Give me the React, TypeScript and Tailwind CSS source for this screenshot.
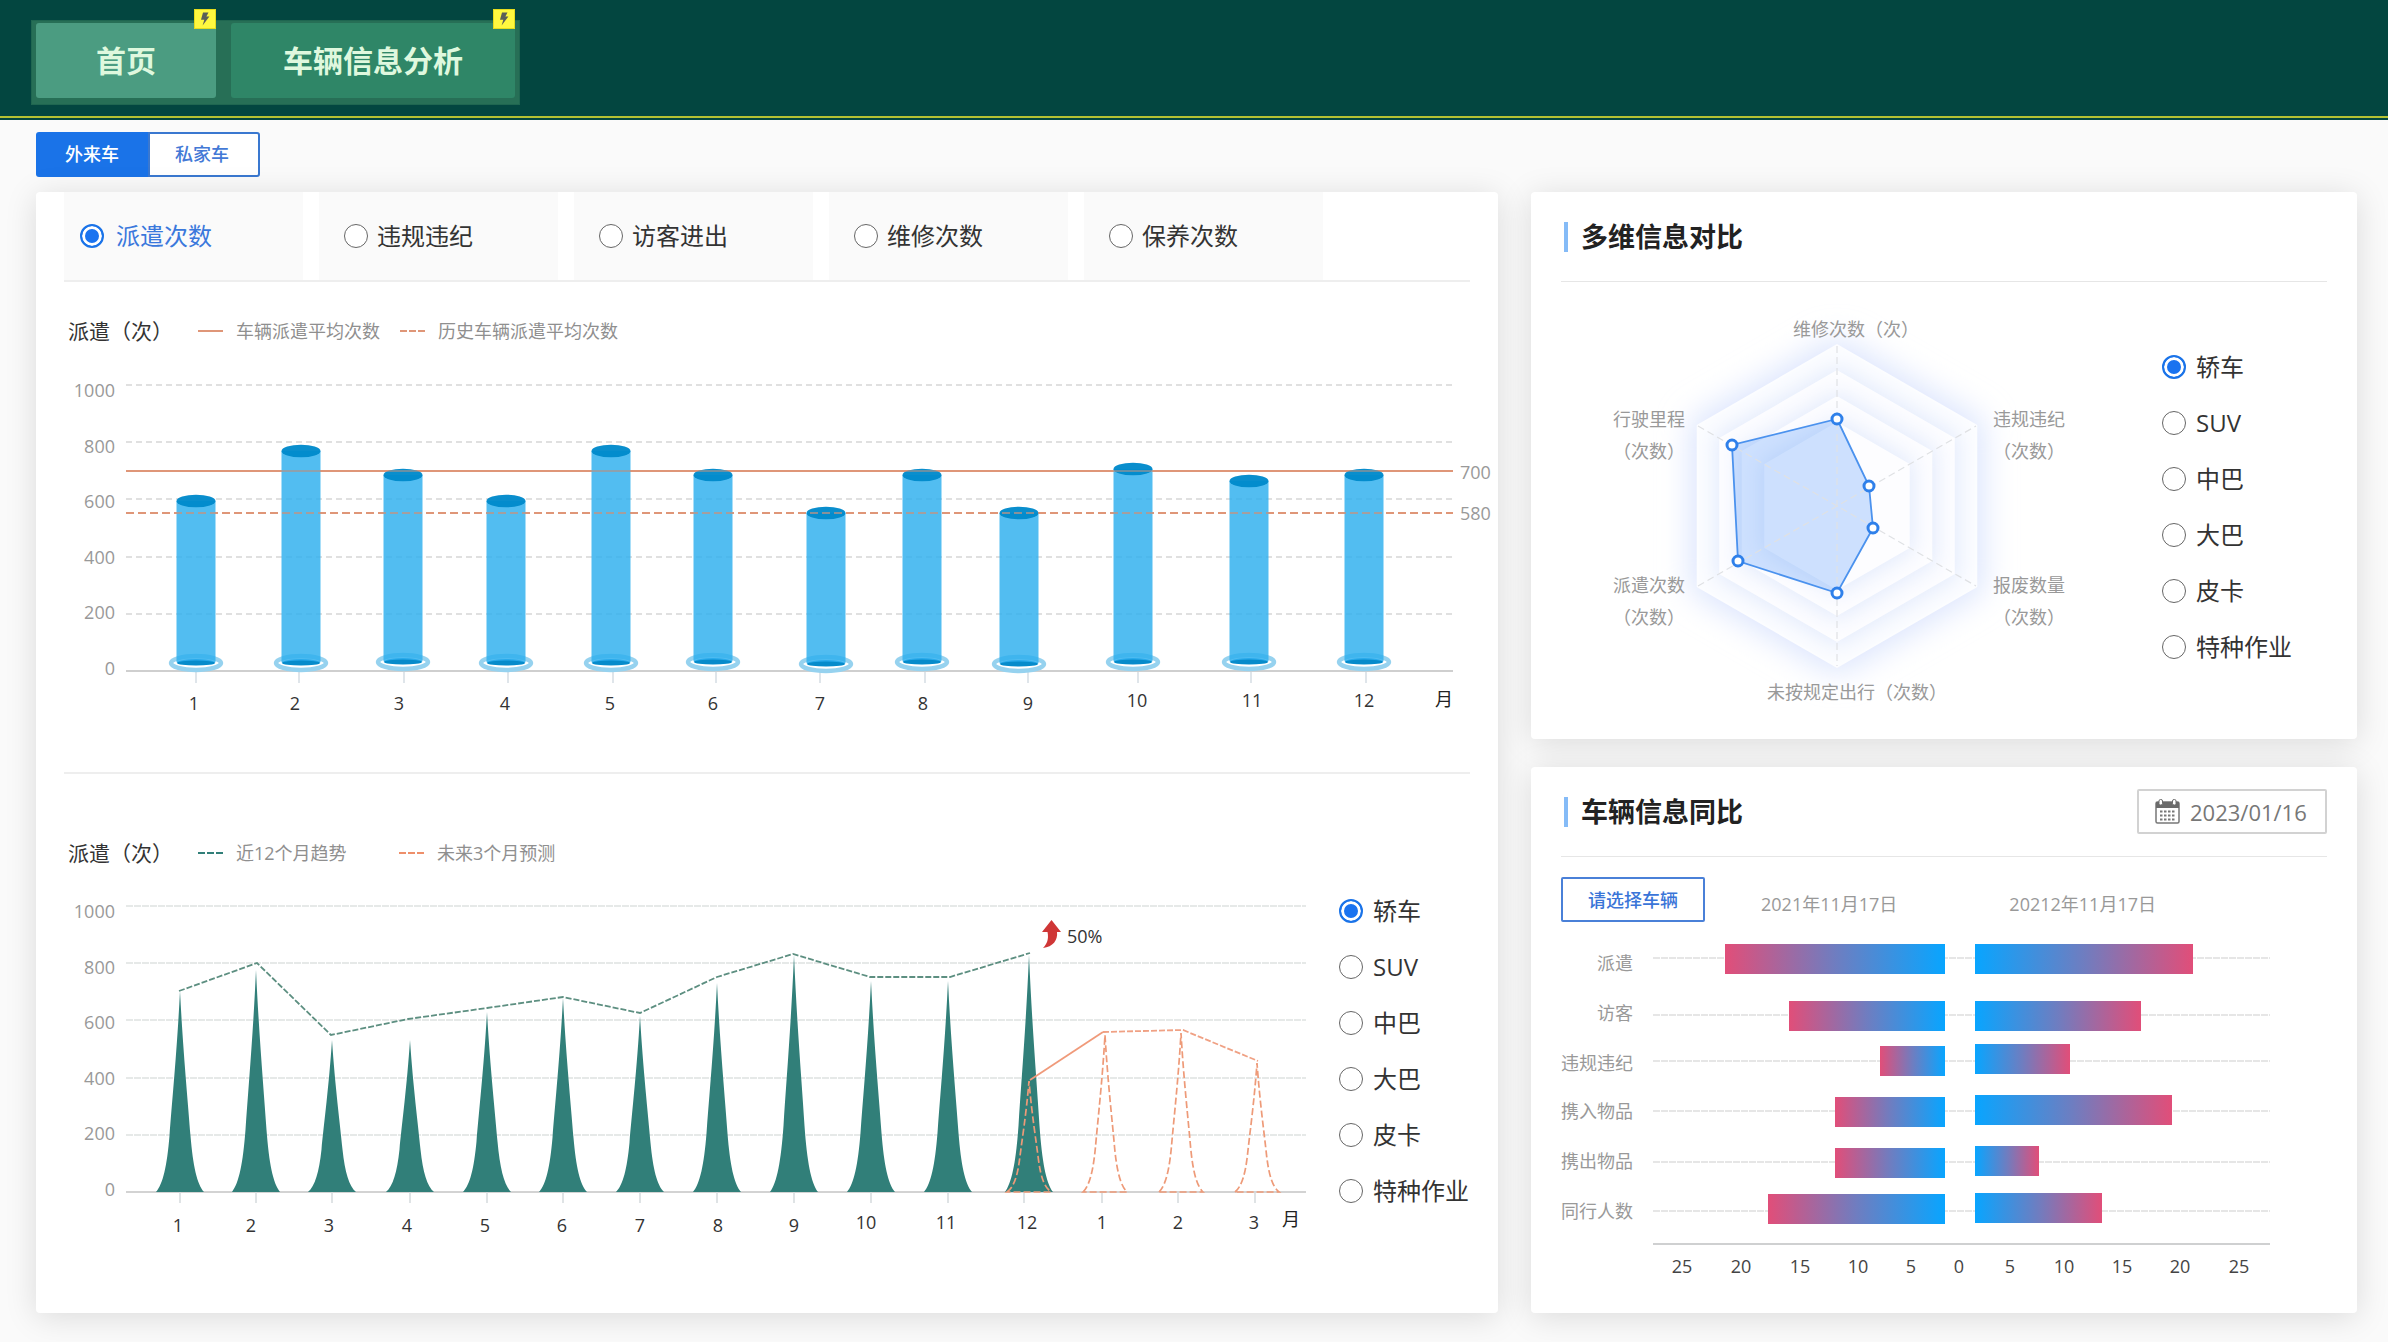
import React from "react";

const FONT =
  "font-['Open_Sans','Noto_Sans_CJK_SC',sans-serif]";

const VEHICLES = ["轿车", "SUV", "中巴", "大巴", "皮卡", "特种作业"];
const METRICS = ["派遣次数", "违规违纪", "访客进出", "维修次数", "保养次数"];

const RADIO =
  "size-6 shrink-0 appearance-none rounded-full border border-[#666] bg-white checked:border-2 checked:border-[#1a73e8] checked:bg-[#1a73f0] checked:shadow-[inset_0_0_0_3px_#fff]";

function BoltBadge() {
  return (
    <span className="absolute -top-[14px] right-0 flex h-5 w-[22px] items-center justify-center border border-[#e6dc1e] bg-[#fff83f]">
      <svg viewBox="0 0 10 14" className="h-[14px] w-[10px]" aria-hidden="true">
        <path d="M3 0.5H8.5L6.4 4.6H9.4L2.6 13.6L4.3 7.8H1L3 0.5Z" fill="#5b5f58" />
      </svg>
    </span>
  );
}

function VehicleRadios({ name, className }: { name: string; className: string }) {
  return (
    <fieldset className={"flex flex-col gap-8 " + className}>
      {VEHICLES.map((v, i) => (
        <label key={v} className="flex h-6 items-center gap-[10px] text-[24px] leading-6 whitespace-nowrap text-[#333]">
          <input type="radio" name={name} defaultChecked={i === 0} className={RADIO} />
          {v}
        </label>
      ))}
    </fieldset>
  );
}

function Legend({ label, color, dashed }: { label: string; color: string; dashed: boolean }) {
  return (
    <span className="flex items-center gap-[13px] text-[18px] leading-7 text-[#8f8f8f]">
      <svg viewBox="0 0 25 4" className="h-1 w-[25px]" aria-hidden="true">
        <line x1="0" y1="2" x2="25" y2="2" stroke={color} strokeWidth="2" strokeDasharray={dashed ? "7 2" : undefined} />
      </svg>
      {label}
    </span>
  );
}

function Label({
  x,
  y,
  text,
  anchor = "middle",
  fill = "#333",
}: {
  x: number;
  y: number;
  text: string;
  anchor?: "start" | "middle" | "end";
  fill?: string;
}) {
  return (
    <text x={x} y={y + 7} textAnchor={anchor} fill={fill} fontSize="18">
      {text}
    </text>
  );
}

const Y_TICKS = [1000, 800, 600, 400, 200, 0];

/* bar centre, bar top, base ellipse centre, tick, label x, label y */
const BARS: [number, number, number, number, number, number][] = [
  [196, 501, 663, 196, 194, 703],
  [301, 451, 663, 299, 295, 703],
  [403, 475, 662, 404, 399, 703],
  [506, 501, 663, 508, 505, 703],
  [611, 451, 663, 613, 610, 703],
  [713, 475, 662, 716, 713, 703],
  [826, 513, 664, 820, 820, 703],
  [922, 475, 662, 925, 923, 703],
  [1019, 513, 664, 1028, 1028, 703],
  [1133, 469, 662, 1138, 1137, 700],
  [1249, 481, 662, 1251, 1252, 700],
  [1364, 475, 662, 1366, 1364, 700],
];

function DispatchChart() {
  const grid = [385, 442, 499, 557, 614];
  return (
    <svg viewBox="66 346 1432 374" className="block w-full" role="img" aria-label="派遣次数">
      {grid.map((y) => (
        <line key={y} x1="126" x2="1453" y1={y} y2={y} stroke="#e0e0e0" strokeWidth="2" strokeDasharray="6 4" />
      ))}
      {Y_TICKS.map((v, i) => (
        <Label key={v} x={115} y={390 + i * 55.5} text={String(v)} anchor="end" fill="#999" />
      ))}
      <line x1="126" x2="1453" y1="671" y2="671" stroke="#cfcfcf" strokeWidth="2" />
      <line x1="126" x2="1453" y1="471" y2="471" stroke="#df9678" strokeWidth="2" />
      <line x1="126" x2="1453" y1="513" y2="513" stroke="#df9678" strokeWidth="2" strokeDasharray="8 4" />
      <Label x={1460} y={472} text="700" anchor="start" fill="#999" />
      <Label x={1460} y={513} text="580" anchor="start" fill="#999" />
      {BARS.map(([cx, top, base, tick, lx, ly], i) => (
        <g key={i}>
          <line x1={tick} x2={tick} y1="672" y2="683" stroke="#d5dde3" strokeWidth="1.5" />
          <ellipse cx={cx} cy={base} rx="25" ry="7" fill="#fff" stroke="#96d2ef" strokeWidth="4.5" />
          <path
            d={`M${cx - 19.5} ${top}V${base - 1}A19.5 3 0 0 0 ${cx + 19.5} ${base - 1}V${top}Z`}
            fill="#2cafee"
            fillOpacity="0.82"
          />
          <path d={`M${cx - 19.5} ${base - 1}A25 8 0 0 1 ${cx + 19.5} ${base - 1}Z`} fill="#22a7ea" fillOpacity="0.85" />
          <ellipse cx={cx} cy={base} rx="19" ry="2.5" fill="#068bcb" />
          <ellipse cx={cx} cy={top} rx="19.5" ry="6.3" fill="#0089cb" fillOpacity="0.96" />
          <Label x={lx} y={ly} text={String(i + 1)} />
        </g>
      ))}
      <line x1="126" x2="1453" y1="471" y2="471" stroke="#df9678" strokeWidth="2" strokeOpacity="0.45" />
      <line x1="126" x2="1453" y1="513" y2="513" stroke="#df9678" strokeWidth="2" strokeDasharray="8 4" strokeOpacity="0.6" />
      <Label x={1444} y={699} text="月" fill="#222" />
    </svg>
  );
}

function spike(cx: number, top: number, half: number) {
  const b = 1193;
  const h = b - top;
  const p = (dx: number, f: number) => `${cx + (dx * half) / 24} ${b - f * h}`;
  return `M${p(-24, 0)}C${p(-17, 0.04)} ${p(-13, 0.13)} ${p(-10.5, 0.28)}C${p(-8, 0.45)} ${p(-3, 0.7)} ${p(0, 1)}C${p(3, 0.7)} ${p(8, 0.45)} ${p(10.5, 0.28)}C${p(13, 0.13)} ${p(17, 0.04)} ${p(24, 0)}Z`;
}

const SPIKES: [number, number][] = [
  [180, 992], [256, 971], [332, 1041], [410, 1041], [487, 1013], [563, 999],
  [640, 1017], [717, 984], [794, 956], [871, 982], [948, 982], [1029, 956],
];
const FORECAST: [number, number][] = [[1029, 1082], [1105, 1036], [1181, 1034], [1257, 1064]];
const TREND_X: [number, number, string, number][] = [
  [180, 178, "1", 1226], [256, 251, "2", 1226], [332, 329, "3", 1226], [410, 407, "4", 1226],
  [487, 485, "5", 1226], [563, 562, "6", 1226], [640, 640, "7", 1226], [717, 718, "8", 1226],
  [794, 794, "9", 1226], [871, 866, "10", 1223], [948, 946, "11", 1223], [1024, 1027, "12", 1223],
  [1102, 1102, "1", 1223], [1178, 1178, "2", 1223], [1255, 1254, "3", 1223],
];

function TrendChart() {
  const grid = [907, 964, 1021, 1079, 1136];
  return (
    <svg viewBox="66 868 1260 380" className="block min-w-0 flex-1" role="img" aria-label="派遣趋势">
      {grid.map((y) => (
        <line key={y} x1="126" x2="1306" y1={y} y2={y} stroke="#e6e9e8" strokeWidth="2" strokeDasharray="7 1" />
      ))}
      {Y_TICKS.map((v, i) => (
        <Label key={v} x={115} y={912 + i * 55.5} text={String(v)} anchor="end" fill="#999" />
      ))}
      <line x1="126" x2="1306" y1="1193" y2="1193" stroke="#d3d3d3" strokeWidth="2" />
      {TREND_X.map(([tick, lx, t, ly], i) => (
        <g key={i}>
          <line x1={tick} x2={tick} y1="1193" y2="1204" stroke="#d5dadd" strokeWidth="1.5" />
          <Label x={lx} y={ly} text={t} />
        </g>
      ))}
      <Label x={1291} y={1220} text="月" fill="#222" />
      {SPIKES.map(([cx, top]) => (
        <path key={cx} d={spike(cx, top, 24)} fill="#317f79" />
      ))}
      {FORECAST.map(([cx, top]) => (
        <path key={cx} d={spike(cx, top, 22)} fill="none" stroke="#ee9a78" strokeWidth="1.7" strokeDasharray="7 3" />
      ))}
      <polyline
        points="179,992 257,964 331,1036 408,1020 487,1009 563,998 640,1014 717,978 793,955 870,978 950,978 1030,954"
        fill="none"
        stroke="#5d8f81"
        strokeWidth="1.8"
        strokeDasharray="6 2"
      />
      <line x1="1030" y1="1081" x2="1103" y2="1033" stroke="#f09a7a" strokeWidth="1.8" />
      <polyline points="1103,1033 1183,1031 1258,1062" fill="none" stroke="#f0a184" strokeWidth="1.8" strokeDasharray="6 2" />
      <path d="M1051.500 921L1061 933H1057C1058 941 1053 948 1043 949C1047 945 1049 940 1047.500 933H1042L1051.500 921Z" fill="#cf3636" />
      <Label x={1067} y={937} text="50%" anchor="start" />
    </svg>
  );
}

function hexagon(r: number) {
  const cx = 1838;
  const cy = 506;
  const dx = r * 0.866;
  return `${cx},${cy - r} ${cx + dx},${cy - r / 2} ${cx + dx},${cy + r / 2} ${cx},${cy + r} ${cx - dx},${cy + r / 2} ${cx - dx},${cy - r / 2}`;
}

const RADAR_POINTS: [number, number][] = [
  [1838, 419], [1870, 486], [1874, 528], [1838, 593], [1739, 561], [1733, 445],
];

function RadarChart() {
  return (
    <svg viewBox="1562 282 578 457" className="block min-w-0 flex-1" role="img" aria-label="多维信息对比">
      <defs>
        <filter id="halo" x="-30%" y="-30%" width="160%" height="160%">
          <feGaussianBlur stdDeviation="16" />
        </filter>
        <filter id="ring" x="-30%" y="-30%" width="160%" height="160%">
          <feGaussianBlur stdDeviation="11" />
        </filter>
        {[160, 136, 110].map((r) => (
          <clipPath key={r} id={`clip-${r}`}>
            <polygon points={hexagon(r)} />
          </clipPath>
        ))}
      </defs>
      <polygon points={hexagon(168)} fill="#d9e3fd" filter="url(#halo)" />
      <polygon points={hexagon(162)} fill="#fcfdff" />
      {[136, 110, 84].map((r, i) => (
        <g key={r} clipPath={`url(#clip-${[160, 136, 110][i]})`}>
          <polygon points={hexagon(r + 4)} fill="#e2eafc" filter="url(#ring)" />
          <polygon points={hexagon(r)} fill="#fdfdff" />
        </g>
      ))}
      <polygon points={RADAR_POINTS.map((p) => p.join(",")).join(" ")} fill="#5f9ffc" fillOpacity="0.3" />
      <g stroke="#dfe1e4" strokeWidth="1.2" strokeDasharray="7 4">
        <line x1="1838" y1="346" x2="1838" y2="666" />
        <line x1="1699" y1="426" x2="1977" y2="586" />
        <line x1="1699" y1="586" x2="1977" y2="426" />
      </g>
      <polygon points={RADAR_POINTS.map((p) => p.join(",")).join(" ")} fill="none" stroke="#4b92ee" strokeWidth="1.8" />
      {RADAR_POINTS.map(([x, y]) => (
        <circle key={`${x}-${y}`} cx={x} cy={y} r="5" fill="#fff" stroke="#2f80ea" strokeWidth="3" />
      ))}
      <Label x={1857} y={329} text="维修次数（次）" fill="#999" />
      <Label x={2030} y={419} text="违规违纪" fill="#999" />
      <Label x={2030} y={451} text="（次数）" fill="#999" />
      <Label x={1650} y={419} text="行驶里程" fill="#999" />
      <Label x={1650} y={451} text="（次数）" fill="#999" />
      <Label x={1650} y={585} text="派遣次数" fill="#999" />
      <Label x={1650} y={617} text="（次数）" fill="#999" />
      <Label x={2030} y={585} text="报废数量" fill="#999" />
      <Label x={2030} y={617} text="（次数）" fill="#999" />
      <Label x={1858} y={692} text="未按规定出行（次数）" fill="#999" />
    </svg>
  );
}

/* name, label y, guide y, left bar start, left bar top, right bar end, right bar top */
const COMPARE: [string, number, number, number, number, number, number][] = [
  ["派遣", 963, 958, 1726, 944, 2194, 944],
  ["访客", 1013, 1015, 1790, 1001, 2142, 1001],
  ["违规违纪", 1063, 1061, 1881, 1046, 2071, 1044],
  ["携入物品", 1111, 1111, 1836, 1097, 2173, 1095],
  ["携出物品", 1161, 1162, 1836, 1148, 2040, 1146],
  ["同行人数", 1211, 1211, 1769, 1194, 2103, 1193],
];
const AXIS: [number, string][] = [
  [1683, "25"], [1742, "20"], [1801, "15"], [1859, "10"], [1912, "5"], [1960, "0"],
  [2011, "5"], [2065, "10"], [2123, "15"], [2181, "20"], [2240, "25"],
];

function CompareChart() {
  return (
    <svg viewBox="1562 922 766 360" className="block w-full" role="img" aria-label="车辆信息同比">
      <defs>
        <linearGradient id="to-left" x1="0" x2="1">
          <stop offset="0" stopColor="#e14e79" />
          <stop offset="0.5" stopColor="#6f7dc0" />
          <stop offset="1" stopColor="#08a5ff" />
        </linearGradient>
        <linearGradient id="to-right" x1="1" x2="0">
          <stop offset="0" stopColor="#e14e79" />
          <stop offset="0.5" stopColor="#6f7dc0" />
          <stop offset="1" stopColor="#08a5ff" />
        </linearGradient>
      </defs>
      {COMPARE.map(([name, ly, gy, lx, ty, rx, ry]) => (
        <g key={name}>
          <Label x={1634} y={ly} text={name} anchor="end" fill="#999" />
          <line x1="1654" x2="2271" y1={gy} y2={gy} stroke="#e6e6e6" strokeWidth="2" strokeDasharray="7 1" />
          <rect x={lx} y={ty} width={1946 - lx} height="30" fill="url(#to-left)" />
          <rect x="1976" y={ry} width={rx - 1976} height="30" fill="url(#to-right)" />
        </g>
      ))}
      <line x1="1654" x2="2271" y1="1244" y2="1244" stroke="#cfd0d1" strokeWidth="2" />
      {AXIS.map(([x, t]) => (
        <Label key={x} x={x} y={1266} text={t} fill="#444" />
      ))}
    </svg>
  );
}

function CalendarIcon() {
  return (
    <svg viewBox="0 0 25 25" className="h-[25px] w-[25px]" aria-hidden="true">
      <rect x="1" y="3" width="23" height="21" rx="1.5" fill="#fff" stroke="#777" strokeWidth="1.5" />
      <rect x="1" y="3" width="23" height="6" fill="#6b6b6b" />
      <rect x="4" y="0.5" width="3.5" height="5.5" rx="1.5" fill="#fff" stroke="#6b6b6b" />
      <rect x="17.5" y="0.5" width="3.5" height="5.5" rx="1.5" fill="#fff" stroke="#6b6b6b" />
      {[11.5, 15.5, 19.5].map((y) =>
        [5, 9, 13, 17].map((x) => <rect key={`${x}-${y}`} x={x} y={y} width="2.5" height="2" fill="#777" />),
      )}
    </svg>
  );
}

const CARD = "rounded-[4px] bg-white shadow-[0_4px_32px_rgba(0,0,0,0.13)]";
const TITLE = "flex items-center gap-[13px] pl-[3px] text-[27px] leading-[30px] font-bold text-[#222]";
const NAV_LINK =
  "relative flex h-[75px] items-center justify-center rounded-[3px] text-[30px] leading-9 font-bold text-[#dff8de] ";

export default function App() {
  return (
    <div className={"min-h-screen bg-[#fafafa] text-[#333] " + FONT}>
      <header className="border-b-2 border-[#034640] bg-[#034640]">
        <div className="border-b-2 border-[#b4c233] pt-5 pb-[11px] pl-[31px]">
          <nav className="flex w-fit gap-[15px] border border-[#1f6650] bg-[#276f56] px-1 pt-[2px] pb-[6px]">
            <a href="#home" className={NAV_LINK + "bg-[#4b9c81] px-[60px]"}>
              首页
              <BoltBadge />
            </a>
            <a href="#analysis" className={NAV_LINK + "bg-[#2f8667] px-[52px]"}>
              车辆信息分析
              <BoltBadge />
            </a>
          </nav>
        </div>
      </header>

      <main className="pt-3 pr-[31px] pb-7 pl-9">
        <div className="flex">
          <button type="button" className="h-[45px] w-28 rounded-l-[3px] bg-[#1a73e8] text-[18px] font-medium text-white">
            外来车
          </button>
          <button
            type="button"
            className="h-[45px] w-28 rounded-r-[3px] border-2 border-[#3a78d0] bg-white pr-1 text-[18px] font-medium text-[#4379d6]"
          >
            私家车
          </button>
        </div>

        <div className="mt-[15px] grid grid-cols-[1462fr_826fr] gap-[33px]">
          <section className={CARD + " min-w-0 pb-[66px]"}>
            <fieldset className="mx-7 flex gap-4 border-b-2 border-[#eee]">
              {METRICS.map((m, i) => (
                <label
                  key={m}
                  className={
                    "flex h-[88px] w-[239px] items-center bg-[#fafafa] text-[24px] leading-6 whitespace-nowrap " +
                    (i === 0 ? "gap-3 pl-4 text-[#3a78dc]" : "gap-[9px] pl-[25px] text-[#333]")
                  }
                >
                  <input type="radio" name="metric" defaultChecked={i === 0} className={RADIO} />
                  {m}
                </label>
              ))}
            </fieldset>

            <div className="mt-[35px] flex h-7 items-center pl-8">
              <h2 className="w-[130px] text-[21px] leading-7 text-[#333]">派遣（次）</h2>
              <div className="flex gap-5">
                <Legend label="车辆派遣平均次数" color="#df9678" dashed={false} />
                <Legend label="历史车辆派遣平均次数" color="#df9678" dashed />
              </div>
            </div>
            <div className="pt-px pl-[30px]">
              <DispatchChart />
            </div>

            <hr className="mx-7 mt-[52px] border-t-2 border-[#eee]" />

            <div className="mt-[65px] flex h-7 items-center pl-8">
              <h2 className="w-[130px] text-[21px] leading-7 text-[#333]">派遣（次）</h2>
              <div className="flex">
                <div className="w-[201px]">
                  <Legend label="近12个月趋势" color="#317f79" dashed />
                </div>
                <Legend label="未来3个月预测" color="#ee8f6a" dashed />
              </div>
            </div>
            <div className="flex items-start pl-[30px]">
              <TrendChart />
              <VehicleRadios name="trend-vehicle" className="w-[172px] shrink-0 pt-8 pl-[13px]" />
            </div>
          </section>

          <div className="flex min-w-0 flex-col gap-7">
            <section className={CARD + " px-[30px]"}>
              <div className="flex h-[90px] items-center border-b border-[#e6e6e6]">
                <h2 className={TITLE}>
                  <span className="h-[30px] w-1 bg-[#85bbf7]" />
                  多维信息对比
                </h2>
              </div>
              <div className="flex items-start">
                <RadarChart />
                <VehicleRadios name="radar-vehicle" className="w-[188px] shrink-0 pt-[73px] pl-[23px]" />
              </div>
            </section>

            <section className={CARD + " flex-1 px-[30px]"}>
              <div className="flex h-[90px] items-center justify-between border-b border-[#e6e6e6]">
                <h2 className={TITLE}>
                  <span className="h-[30px] w-1 bg-[#85bbf7]" />
                  车辆信息同比
                </h2>
                <label className="flex h-[45px] w-[190px] items-center gap-[10px] rounded-[2px] border-2 border-[#d2d2d2] bg-white pl-4">
                  <CalendarIcon />
                  <input
                    type="text"
                    aria-label="日期"
                    defaultValue="2023/01/16"
                    className="w-[125px] min-w-0 bg-transparent text-[22px] leading-8 text-[#777] outline-none"
                  />
                </label>
              </div>
              <div className="mt-5 flex items-end text-[18px] leading-9 text-[#999]">
                <button
                  type="button"
                  className="h-[45px] w-36 rounded-[2px] border-2 border-[#4a80d8] bg-white font-medium text-[#3a75d8]"
                >
                  请选择车辆
                </button>
                <time className="ml-14">2021年11月17日</time>
                <time className="ml-28">20212年11月17日</time>
              </div>
              <CompareChart />
            </section>
          </div>
        </div>
      </main>
    </div>
  );
}
